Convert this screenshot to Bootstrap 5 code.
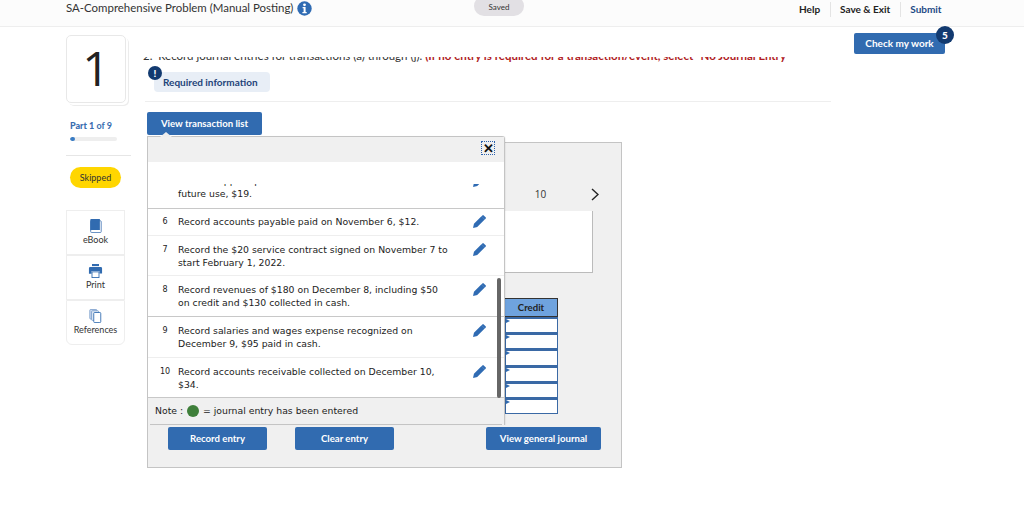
<!DOCTYPE html>
<html lang="en">
<head>
<meta charset="utf-8">
<title>SA-Comprehensive Problem</title>
<link href="https://cdn.jsdelivr.net/npm/bootstrap@5.3.0/dist/css/bootstrap.min.css" rel="stylesheet">
<style>
html,body{height:529px;overflow:hidden;background:#fff}
body{font-family:Lato,"Open Sans","Liberation Sans",sans-serif;color:#222}
.top-bar{height:27px;background:#fcfcfc;border-bottom:1px solid #eee;padding-left:66px;position:relative}
.top-title{font-size:11.45px;color:#333;line-height:16px}
.saved-pill{position:absolute;left:474px;top:-4px;width:50px;height:20px;border-radius:10px;background:#e2e0e4;font-size:8px;line-height:22px;text-align:center;color:#333}
.top-links{position:absolute;left:799px;top:2px;font-size:10px;font-weight:700;height:15px}
.top-links a{color:#222;text-decoration:none;padding:0 10px 0 9px;line-height:15px;display:block}
.top-links a:first-child{padding-left:0}
.top-links a+a{border-left:1px solid #e4e4e4}
.top-links a.sub{color:#1d4a85}
.main-wrap{padding:8px 0 0 66px;position:relative}
.side-col{width:65px;flex:none}
.num-card{width:60px;height:68px;border:1px solid #e8e8e8;border-radius:5px;font-family:"Open Sans",sans-serif;font-size:48px;line-height:64px;text-align:center;background:#fff;box-shadow:2px 2px 0 #fff,3px 3px 0 #ececec;color:#222}
.part-lbl{font-size:9px;font-weight:700;color:#3a6db0;margin:17px 0 0 4px;line-height:12px}
.part-lbl b{font-weight:900}
.part-track{width:47px;height:4px;margin:5px 0 0 4px;border-radius:2px;background:#eee;overflow:hidden}
.part-fill{width:5px;height:4px;background:#3a7cc4;border-radius:2px}
.side-rule{border-top:1px solid #e6e6e6;margin:14px 0 11px;width:65px}
.skip-pill{width:51px;height:21px;margin-left:4px;border-radius:11px;background:#ffd600;font-size:9px;line-height:21px;text-align:center;color:#333}
.tool-box{width:59px;margin-top:22px}
.tool-cell{height:45px;border:1px solid #eee;text-align:center;font-size:9px;color:#333;line-height:10px;padding-top:8px;background:#fff}
.tool-cell svg{display:block;margin:0 auto 2px}
.q-col{width:686px;margin-left:14px;flex:none}
.q-clip{height:7px;margin:22px 0 0 -2px;overflow:hidden;white-space:nowrap;font-size:11.5px;line-height:14px;color:#333}
.q-clip span{display:block;margin-top:-8px}
.q-clip em{font-style:normal;font-weight:700;color:#b01c24}
.req-wrap{position:relative;margin:8px 0 0 9px;width:116px;height:20px;background:#e8eef6;border-radius:4px;font-size:10px;font-weight:700;line-height:20px;color:#1e4479;padding-left:9px}
.req-dot{position:absolute;left:-6px;top:-6px;width:14px;height:14px;border-radius:50%;background:#123a70;color:#fff;font-size:10px;font-weight:900;line-height:14px;text-align:center}
.q-rule{border-top:1px solid #eee;margin:9px 0 10px}
.btn-blue{background:#316bb0;color:#fff;border:0;border-radius:2px;font-size:9.6px;font-weight:700;padding:0;height:22px;line-height:22px;text-align:center}
.btn-blue:hover{background:#316bb0;color:#fff}
.list-toggle{width:115px;height:23px;margin-left:2px;display:block}
.work-area{position:relative;margin:7px 0 0 2px;width:475px}
.pale-panel{height:326px;background:#f0f0f0;border:1px solid #c4c4c4;padding-top:42px}
.step-row{height:18px;font-family:"Open Sans",sans-serif;font-size:10px;line-height:16px;padding-left:334px;color:#333;display:flex;align-items:center}
.step-row span{width:39px;text-align:center;display:block}
.step-row svg{margin-left:31px;display:block}
.white-box{width:238px;height:62px;margin:8px 0 0 207px;background:#fff;border-right:1px solid #bbb;border-bottom:1px solid #bbb}
.credit-wrap{width:53px;margin:25px 0 0 357px}
.credit-head{height:19px;background:#6fa3de;border:1px solid #333;border-left:0;font-size:9.6px;font-weight:700;text-align:center;line-height:18px;color:#222}
.credit-cell{height:16.2px;background:#fff;border:1px solid #3a69a5;border-top:2px solid #3a69a5;position:relative}
.credit-cell::before{content:"";position:absolute;left:0;top:0;border-left:4px solid #316bb0;border-top:2px solid transparent;border-bottom:2px solid transparent}
.btn-row{position:relative;margin-top:13px;height:23px}
.btn-row .btn{position:absolute;top:0;height:23px}
.btn-rec{left:20px;width:99px}
.btn-clr{left:147px;width:99px}
.btn-gen{left:338px;width:115px}
.popup-list{position:absolute;left:0;top:-6px;width:358px;border:1px solid #c4c4c4;border-bottom:0;border-top-right-radius:3px;background:#fff;box-shadow:1px 0 1px rgba(0,0,0,.05)}
.popup-list::before{content:"";position:absolute;left:12px;top:-5px;border-left:6px solid transparent;border-right:6px solid transparent;border-bottom:5px solid #eee}
.popup-head{height:25px;background:#f0f0f0;position:relative}
.close-x{position:absolute;left:333px;top:4px;width:14px;height:14px;border:1px dotted #2c62ad;font-size:13px;font-weight:700;line-height:12px;text-align:center;color:#111}
.entry-list{height:236px;overflow:hidden;font-family:"DejaVu Sans","Liberation Sans",sans-serif;font-size:9.3px;line-height:13px;color:#222;position:relative}
.entry-row{display:flex;padding:7px 0 6px;border-bottom:1px solid #eee}
.entry-row.first{padding:6px 0 7px}
.entry-row.wide{padding:7px 0 7px}
.entry-row.dark{border-bottom-color:#c8c8c8}
.entry-no{width:30px;flex:none;text-align:center;font-size:8px;padding-left:4px}
.entry-text{width:295px;flex:none;white-space:nowrap}
.entry-pen{flex:none}
.clip-row{height:47px;padding-top:22px;border-bottom:1px solid #c8c8c8}
.clip-inner{height:24px;overflow:hidden;display:flex;align-items:flex-end;padding-bottom:8px}
.clip-inner .entry-pen{align-self:flex-start;margin-top:-10px}
.entry-scroll{position:absolute;left:349px;top:116px;width:4px;height:120px;background:#666;border-radius:2px}
.note-row{height:27px;background:#f0f0f0;font-size:9.3px;line-height:26px;font-family:"DejaVu Sans","Liberation Sans",sans-serif;padding-left:7px;color:#222;position:relative}
.note-row::after{content:"";position:absolute;left:2px;right:2px;bottom:0;border-bottom:1px solid #c4c4c4}
.green-dot{display:inline-block;width:12px;height:12px;border-radius:50%;background:#3f7f3a;vertical-align:-3px;margin:0 1px}
.check-wrap{position:absolute;left:854px;top:6px;width:91px}
.check-btn{width:91px;height:21px;line-height:21px;font-size:10px;display:block}
.check-badge{position:absolute;right:-9px;top:-7px;width:18px;height:18px;border-radius:50%;background:#123a70;color:#fff;font-size:10px;font-weight:900;line-height:18px;text-align:center}
</style>
</head>
<body>
<svg width="0" height="0" class="position-absolute">
<symbol id="pen" viewBox="0 0 16 16"><path fill="#2f6bb3" d="M0 16l1.2-5.2L10.4 1.6l4 4L5.2 14.8zM11.5.5a1.2 1.2 0 0 1 1.7 0l2.3 2.3a1.2 1.2 0 0 1 0 1.7l-.9.9-4-4z"/></symbol>
</svg>

<header class="top-bar">
  <div class="d-flex align-items-center gap-1 top-title">
    <span>SA-Comprehensive Problem (Manual Posting)</span>
    <svg width="15" height="15" viewBox="0 0 15 15"><circle cx="7.5" cy="7.5" r="7.2" fill="#2f6bb3"/><circle cx="7.5" cy="3.8" r="1.4" fill="#fff"/><path fill="#fff" d="M5.6 6h3v5h1.1v1.3H5.4V11h1.2V7.3h-1z"/></svg>
  </div>
  <div class="saved-pill">Saved</div>
  <nav class="top-links d-flex">
    <a href="#">Help</a><a href="#">Save &amp; Exit</a><a href="#" class="sub">Submit</a>
  </nav>
</header>

<main class="main-wrap d-flex">
  <aside class="side-col">
    <div class="num-card">1</div>
    <div class="part-lbl"><b>Part 1</b> of 9</div>
    <div class="part-track"><div class="part-fill"></div></div>
    <div class="side-rule"></div>
    <div class="skip-pill">Skipped</div>
    <div class="tool-box">
      <div class="tool-cell">
        <svg width="13" height="14" viewBox="0 0 14 16"><rect x="1.5" y="2" width="12" height="13.5" rx="1" fill="#fff" stroke="#4c7bb8"/><path fill="#316bb0" d="M2 0h10v12.5H2a1.5 1.5 0 0 0-1 .4V1a1 1 0 0 1 1-1z"/></svg>
        eBook
      </div>
      <div class="tool-cell">
        <svg width="15" height="14" viewBox="0 0 16 16"><rect x="4" y="0" width="8" height="2.4" fill="#316bb0"/><path fill="#316bb0" d="M1.5 3.5h13a1.5 1.5 0 0 1 1 1.4v6h-3V8h-9v3h-3V5a1.5 1.5 0 0 1 1-1.5z"/><rect x="4" y="9" width="8" height="6.5" fill="#fff" stroke="#316bb0"/></svg>
        Print
      </div>
      <div class="tool-cell rounded-bottom">
        <svg width="13" height="14" viewBox="0 0 14 16"><rect x=".5" y=".5" width="8" height="11" rx="1" fill="#cfdcef" stroke="#7d9fcc"/><rect x="2.5" y="2" width="8" height="11" rx="1" fill="#dfe8f4" stroke="#7d9fcc"/><rect x="5" y="4" width="8" height="11.5" rx="1" fill="#fff" stroke="#316bb0"/></svg>
        References
      </div>
    </div>
  </aside>

  <section class="q-col">
    <div class="q-clip"><span>2. &nbsp;Record journal entries for transactions (a) through (j). <em>(If no entry is required for a transaction/event, select "No Journal Entry"</em></span></div>
    <div class="req-wrap"><span class="req-dot">!</span>Required information</div>
    <div class="q-rule"></div>
    <button class="btn btn-blue list-toggle" type="button">View transaction list</button>

    <div class="work-area">
      <div class="pale-panel">
        <div class="step-row"><span>9</span><span>10</span><svg width="8" height="13" viewBox="0 0 8 13"><path d="M1 1l6 5.5L1 12" fill="none" stroke="#222" stroke-width="1.4"/></svg></div>
        <div class="white-box"></div>
        <div class="credit-wrap">
          <div class="credit-head">Credit</div>
          <div class="credit-cell"></div><div class="credit-cell"></div><div class="credit-cell"></div><div class="credit-cell"></div><div class="credit-cell"></div><div class="credit-cell"></div>
        </div>
        <div class="btn-row">
          <button class="btn btn-blue btn-rec" type="button">Record entry</button>
          <button class="btn btn-blue btn-clr" type="button">Clear entry</button>
          <button class="btn btn-blue btn-gen" type="button">View general journal</button>
        </div>
      </div>

      <div class="popup-list">
        <div class="popup-head"><span class="close-x">✕</span></div>
        <div class="entry-list">
          <div class="clip-row">
            <div class="clip-inner">
              <div class="entry-no"></div>
              <div class="entry-text">Record supplies purchased on November 5 for<br>future use, $19.</div>
              <svg class="entry-pen" width="13" height="13"><use href="#pen"/></svg>
            </div>
          </div>
          <div class="entry-row first"><div class="entry-no">6</div><div class="entry-text">Record accounts payable paid on November 6, $12.</div><svg class="entry-pen" width="13" height="13"><use href="#pen"/></svg></div>
          <div class="entry-row"><div class="entry-no">7</div><div class="entry-text">Record the $20 service contract signed on November 7 to<br>start February 1, 2022.</div><svg class="entry-pen" width="13" height="13"><use href="#pen"/></svg></div>
          <div class="entry-row wide dark"><div class="entry-no">8</div><div class="entry-text">Record revenues of $180 on December 8, including $50<br>on credit and $130 collected in cash.</div><svg class="entry-pen" width="13" height="13"><use href="#pen"/></svg></div>
          <div class="entry-row wide"><div class="entry-no">9</div><div class="entry-text">Record salaries and wages expense recognized on<br>December 9, $95 paid in cash.</div><svg class="entry-pen" width="13" height="13"><use href="#pen"/></svg></div>
          <div class="entry-row dark"><div class="entry-no">10</div><div class="entry-text">Record accounts receivable collected on December 10,<br>$34.</div><svg class="entry-pen" width="13" height="13"><use href="#pen"/></svg></div>
          <div class="entry-scroll"></div>
        </div>
        <div class="note-row">Note : <span class="green-dot"></span> = journal entry has been entered</div>
      </div>
    </div>
  </section>

  <div class="check-wrap">
    <button class="btn btn-blue check-btn" type="button">Check my work</button>
    <span class="check-badge">5</span>
  </div>
</main>
<script src="https://cdn.jsdelivr.net/npm/bootstrap@5.3.0/dist/js/bootstrap.bundle.min.js"></script>
</body>
</html>
